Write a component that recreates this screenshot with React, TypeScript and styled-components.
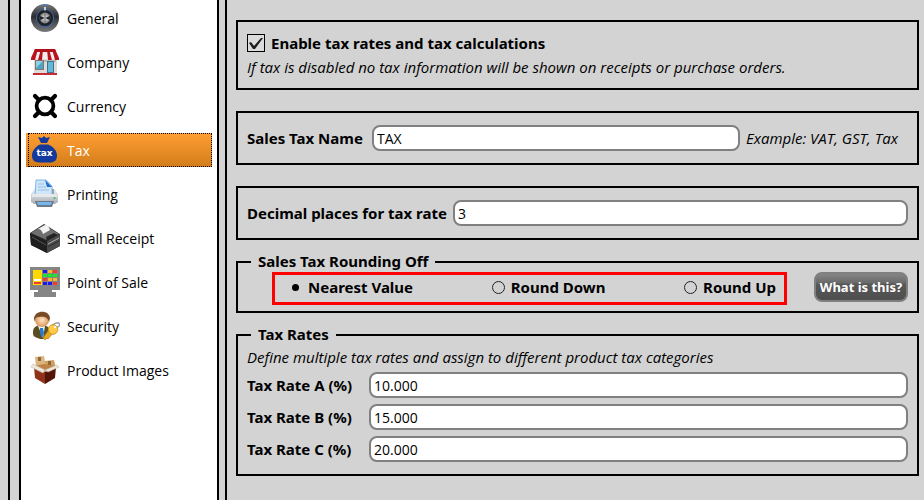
import React, { useState } from 'react';
import styled, { createGlobalStyle } from 'styled-components';

const GlobalStyle = createGlobalStyle`
  * {
    box-sizing: border-box;
  }
  body {
    margin: 0;
    background: #d3d3d3;
    color: #000;
    font-family: 'Noto Sans', 'Open Sans', sans-serif;
  }
`;

const Page = styled.div`
  display: flex;
  min-height: 100vh;
  padding-left: 8px;
`;

const Frame = styled.div`
  display: flex;
  flex: 1;
  min-width: 0;
  gap: 6px;
  padding-left: 9px;
  border-left: 2px solid #000;
`;

const Sidebar = styled.nav`
  display: flex;
  flex-direction: column;
  flex: 0 0 200px;
  gap: 10px;
  padding: 1px 5px;
  background: #fff;
  border: solid #000;
  border-width: 0 2px;
`;

const NavItem = styled.button<{ $active: boolean }>`
  position: relative;
  display: flex;
  align-items: center;
  gap: 7px;
  height: 34px;
  padding: 0 4px;
  border: 0;
  outline: none;
  background: ${(p) => (p.$active ? 'linear-gradient(#ff9f33, #d27c1a)' : 'transparent')};
  color: ${(p) => (p.$active ? '#fff' : '#000')};
  font: 14px/20px 'Open Sans', sans-serif;
  text-align: left;

  &::after {
    content: '';
    display: ${(p) => (p.$active ? 'block' : 'none')};
    position: absolute;
    inset: 0 0 0 2px;
    border: 1px dotted #000;
  }
`;

const NavText = styled.span`
  padding-top: 2px;
`;

const IconArt = styled.svg`
  width: 30px;
  height: 30px;
  flex: none;
`;

const Content = styled.main`
  display: flex;
  flex-direction: column;
  flex: 1;
  min-width: 0;
  gap: 21px;
  padding: 20px 5px 20px 9px;
  border-left: 2px solid #000;
`;

const Panel = styled.section`
  padding: 12px 9px;
  border: 2px solid #000;
`;

const Group = styled.fieldset<{ $bottom: number }>`
  min-width: 0;
  margin: -9px 0 0;
  padding: 0 9px ${(p) => p.$bottom}px;
  border: 2px solid #000;
`;

const Legend = styled.legend`
  margin-left: 4px;
  padding: 0 7px 2px;
  font: bold 15px/18px 'Noto Sans', sans-serif;
`;

const CheckLabel = styled.label`
  display: flex;
  align-items: center;
  gap: 6px;
  height: 18px;
  font: bold 15px/18px 'Noto Sans', sans-serif;
`;

const CheckCell = styled.span`
  display: grid;
  width: 18px;
  height: 18px;

  > * {
    grid-area: 1 / 1;
  }
`;

const CheckInput = styled.input`
  appearance: none;
  width: 18px;
  height: 18px;
  margin: 0;
  border: 1px solid #000;
  background: #dcdcdc;

  &:not(:checked) + svg {
    visibility: hidden;
  }
`;

const CheckMark = styled.svg`
  width: 18px;
  height: 18px;
  pointer-events: none;
`;

const Note = styled.p`
  margin: 0;
  font: italic 15px/24px 'Open Sans', sans-serif;
`;

const PanelNote = styled(Note)`
  margin: 3px 0 -3px;
`;

const GroupNote = styled(Note)`
  margin-bottom: 3px;
`;

const Example = styled.span`
  flex: 0 0 162px;
  font: italic 15px/24px 'Open Sans', sans-serif;
`;

const FieldRow = styled.div`
  display: flex;
  align-items: center;
  gap: 6px;

  > label {
    min-width: 119px;
  }
`;

const RateList = styled.div`
  display: grid;
  grid-template-columns: 116px 1fr;
  align-items: center;
  gap: 6px;
`;

const FieldLabel = styled.label`
  font: bold 15px/20px 'Noto Sans', sans-serif;
  white-space: nowrap;
`;

const TextField = styled.input`
  flex: 1;
  min-width: 0;
  width: 100%;
  height: 26px;
  padding: 0 3px;
  border: 2px solid #808080;
  border-radius: 8px;
  background: #fff;
  color: #000;
  font: 14px/20px 'Open Sans', sans-serif;
`;

const RoundingRow = styled.div`
  display: flex;
  align-items: flex-start;
  gap: 27px;
  padding-left: 25px;
`;

const RadioBox = styled.div`
  display: flex;
  flex: 1;
  align-items: center;
  justify-content: space-between;
  height: 33px;
  padding: 0 8px 3px 14px;
  border: 3px solid #f00;
`;

const RadioLabel = styled.label`
  display: flex;
  align-items: center;
  gap: 6px;
  font: bold 15px/20px 'Noto Sans', sans-serif;
`;

const RadioInput = styled.input`
  appearance: none;
  width: 13px;
  height: 13px;
  margin: 0;
  border: 1px solid #222;
  border-radius: 50%;

  &:checked {
    border: 3px solid transparent;
    background: #000 padding-box;
  }
`;

const HelpButton = styled.button`
  width: 94px;
  height: 30px;
  padding: 0;
  border: 2px solid #808080;
  border-radius: 8px;
  background: linear-gradient(#858585, #686868 36%, #585858 37%, #4e4e4e);
  color: #fff;
  font: bold 13px/20px 'Noto Sans', sans-serif;
  white-space: nowrap;
`;

const GeneralIcon = () => (
  <IconArt viewBox="0 0 30 30" aria-hidden="true">
    <defs>
      <linearGradient id="dial" x2="0" y2="1">
        <stop stopColor="#777b80" />
        <stop offset=".45" stopColor="#2b2c2e" />
        <stop offset=".6" stopColor="#454647" />
        <stop offset="1" stopColor="#77797c" />
      </linearGradient>
      <radialGradient id="knob">
        <stop stopColor="#ffffff" />
        <stop offset="1" stopColor="#77797c" />
      </radialGradient>
    </defs>
    <circle cx="15" cy="15" r="14" fill="url(#dial)" />
    <circle cx="15" cy="15" r="8.6" fill="#202225" stroke="#3863b0" strokeWidth="1" />
    <circle cx="15" cy="15" r="5.4" fill="url(#knob)" />
    <path d="M10 13l5 2 5-2v4l-5-2-5 2z" fill="#232427" />
    <path d="M15 11v8" stroke="#4a4c50" strokeWidth=".8" />
    <path d="M13 1.2h4l-2 2z" fill="#3980e8" />
    <path d="M15 4v3.5" stroke="#fff" strokeWidth="1.4" />
  </IconArt>
);

const CompanyIcon = () => (
  <IconArt viewBox="0 0 30 30" aria-hidden="true">
    <path d="M4 11h23v16H4z" fill="#dedcdb" />
    <path d="M5 13h21v2H5z" fill="#b9b5b3" />
    <path d="M5 13h9v10H5z" fill="#86726b" />
    <path d="M6 14h7v8H6z" fill="#4aa5c6" />
    <path d="M6 14h7l-7 7z" fill="#8bd0e4" />
    <path d="M17 14h7v12h-7z" fill="#3e7391" />
    <path d="M18 15h5v10h-5z" fill="#62b8d5" />
    <path d="M5 2h20l4 10H1z" fill="#f3eeee" />
    <path d="M5 2h3L5 13H1v-2zM11 2h2l-1 11H8zM17 2h2l3 11h-4zM22 2h3l4 9v2h-4z" fill="#b9141d" />
    <path d="M5 2h20l1 3H4z" fill="#b3121b" />
    <path d="M3 26h24v2H3z" fill="#cb2934" />
  </IconArt>
);

const CurrencyIcon = () => (
  <IconArt viewBox="0 0 30 30" aria-hidden="true">
    <circle cx="15" cy="15" r="8.4" fill="none" stroke="#000" strokeWidth="3.8" />
    <path d="M5 5l4 4M25 5l-4 4M5 25l4-4M25 25l-4-4" stroke="#000" strokeWidth="4.2" strokeLinecap="round" />
  </IconArt>
);

const TaxText = styled.text`
  font: bold 9px 'DejaVu Sans', sans-serif;
`;

const TaxIcon = () => (
  <IconArt viewBox="0 0 30 30" aria-hidden="true">
    <path
      d="M8 2l4 1 2-2 2 2 4-1-3 6h-6zM10 9.500h8c5 2 9 6 9 11 0 5-3 7-7 7H9c-5 0-7-3-7-7 0-5 4-9 8-11z"
      fill="#12399b"
    />
    <TaxText x="14.5" y="21" textAnchor="middle" fill="#fff">tax</TaxText>
  </IconArt>
);

const PrinterIcon = () => (
  <IconArt viewBox="0 0 30 30" aria-hidden="true">
    <defs>
      <linearGradient id="printer" x2="0" y2="1">
        <stop stopColor="#f1f2f3" />
        <stop offset="1" stopColor="#a9aeb4" />
      </linearGradient>
    </defs>
    <path d="M4 10h21l3 5v8l-3 2H4l-3-2v-8z" fill="url(#printer)" />
    <path d="M5 10h19v6H5z" fill="#9aa2aa" />
    <path d="M6 1h10l6 6v9H5z" fill="#cfe7fc" stroke="#67a6df" strokeWidth=".8" />
    <path d="M15 1l7 7h-5z" fill="#1c6dcc" />
    <path d="M8 5h6M8 8h8M8 11h11" stroke="#9bbfe0" />
    <path d="M2 15h25v3H2z" fill="#e6e8ea" />
    <path d="M5 22h19l-2 6H7z" fill="#6e7984" />
    <path d="M7 23h15l-1 3H8z" fill="#77b5ee" />
    <circle cx="24.500" cy="19" r="1" fill="#25c843" />
  </IconArt>
);

const ReceiptIcon = () => (
  <IconArt viewBox="0 0 30 30" aria-hidden="true">
    <path d="M0 10L14 1l16 10v12l-13 7L1 22z" fill="#343434" />
    <path d="M0 10l17 8v12L1 22z" fill="#1f1f1f" />
    <path d="M17 18l13-7v12l-13 7z" fill="#4b4b4b" />
    <path d="M1 10l13-8 15 9-12 6z" fill="#6f6f6f" />
    <path d="M16 14l8-4 4 2-11 6z" fill="#242424" />
    <path d="M8 6l7-4c3 0 4 2 5 5l-7 4c-1-3-2-5-5-5z" fill="#f2f2f2" />
    <path d="M18 21l11-6" stroke="#b0b0b0" />
    <path d="M18 24l11-6" stroke="#303030" />
    <path d="M2 14l14 8" stroke="#555" />
  </IconArt>
);

const tiles = [
  ['#1818f5', '#ffb52b', '#f53a2e'],
  ['#10ee24', '#10ee24', '#10ee24'],
  ['#f53a2e', '#ffb52b', '#ffb52b'],
  ['#1818f5', '#1818f5', '#f53a2e'],
];

const PosIcon = () => (
  <IconArt viewBox="0 0 30 30" aria-hidden="true">
    <path d="M0 0h30v23H22v2h4v5H4v-5h4v-2H0z" fill="#858585" />
    <path d="M3 3h9v15H3z" fill="#ffd900" />
    <path d="M4 12h7v2H4z" fill="#fff" />
    <path d="M4 15h7v2H4z" fill="#ef3b2f" />
    {tiles.map((line, y) =>
      line.map((fill, x) => (
        <rect key={`${x}-${y}`} x={13 + x * 5} y={3 + y * 4} width={4} height={3} fill={fill} />
      )),
    )}
  </IconArt>
);

const SecurityIcon = () => (
  <IconArt viewBox="0 0 30 30" aria-hidden="true">
    <defs>
      <radialGradient id="face">
        <stop stopColor="#ffe6c4" />
        <stop offset="1" stopColor="#d9975e" />
      </radialGradient>
    </defs>
    <path d="M3 21c0-5 4-7 8-7s8 1 10 6l-3 7c-5 2-9 1-13-1-2-1-2-3-2-5z" fill="#5b4d22" />
    <path d="M8 15h7l-2 12z" fill="#f4f5f7" />
    <path d="M10 17h3l1 5-2 5-2-5z" fill="#247bce" />
    <circle cx="12" cy="9" r="7" fill="url(#face)" />
    <path d="M4 8c0-9 15-10 16-1l-1 4c-1-5-5-6-10-5-3 0-4 1-4 5z" fill="#794c27" />
    <ellipse cx="26" cy="14.500" rx="3.800" ry="2.200" transform="rotate(-25 26 14.500)" fill="none" stroke="#9ba0a8" strokeWidth="1.400" />
    <path d="M18 20l-5 7 2 2 2-2 1 1 5-6z" fill="#e5a821" stroke="#b87a12" strokeWidth=".7" />
    <circle cx="23" cy="18.500" r="4.800" fill="#ffca45" stroke="#c58b1c" strokeWidth=".8" />
    <circle cx="25" cy="16" r="1.200" fill="#fff" />
  </IconArt>
);

const ProductIcon = () => (
  <IconArt viewBox="0 0 30 30" aria-hidden="true">
    <path d="M5 2l9-1 2 11H6z" fill="#dcb67f" />
    <path d="M15 6l9-1 2 8H15z" fill="#cfa062" />
    <path d="M8 2h3v4H8zM18 6h3v4h-3z" fill="#8d6639" />
    <path d="M4 12l11 5v12L5 23z" fill="#8e3218" />
    <path d="M15 17l11-5-1 11-10 6z" fill="#541509" />
    <path d="M4 11l10-2 11 2-10 6z" fill="#bd8448" />
    <path d="M3 9l-2 3 12 6 2-3zM27 10l2 2-11 5-3-2z" fill="#eee8df" stroke="#c7b9a5" strokeWidth=".6" />
  </IconArt>
);

const sections = [
  { name: 'General', Icon: GeneralIcon },
  { name: 'Company', Icon: CompanyIcon },
  { name: 'Currency', Icon: CurrencyIcon },
  { name: 'Tax', Icon: TaxIcon },
  { name: 'Printing', Icon: PrinterIcon },
  { name: 'Small Receipt', Icon: ReceiptIcon },
  { name: 'Point of Sale', Icon: PosIcon },
  { name: 'Security', Icon: SecurityIcon },
  { name: 'Product Images', Icon: ProductIcon },
];

const roundings = ['Nearest Value', 'Round Down', 'Round Up'];

const rates = [
  { id: 'A', value: '10.000' },
  { id: 'B', value: '15.000' },
  { id: 'C', value: '20.000' },
];

export default function App() {
  const [section, setSection] = useState('Tax');
  const [rounding, setRounding] = useState(roundings[0]);

  return (
    <Page>
      <GlobalStyle />
      <Frame>
        <Sidebar>
          {sections.map(({ name, Icon }) => (
            <NavItem
              key={name}
              type="button"
              $active={name === section}
              aria-current={name === section ? 'page' : undefined}
              onClick={() => setSection(name)}
            >
              <Icon />
              <NavText>{name}</NavText>
            </NavItem>
          ))}
        </Sidebar>
        <Content>
          <Panel>
            <CheckLabel>
              <CheckCell>
                <CheckInput type="checkbox" defaultChecked />
                <CheckMark viewBox="0 0 18 18" aria-hidden="true">
                  <path d="M2 9l2-1 3 4 7-8h2L8 15H6z" fill="#1c1c1c" />
                </CheckMark>
              </CheckCell>
              Enable tax rates and tax calculations
            </CheckLabel>
            <PanelNote>
              If tax is disabled no tax information will be shown on receipts or purchase orders.
            </PanelNote>
          </Panel>
          <Panel>
            <FieldRow>
              <FieldLabel htmlFor="tax-name">Sales Tax Name</FieldLabel>
              <TextField id="tax-name" defaultValue="TAX" />
              <Example>Example: VAT, GST, Tax</Example>
            </FieldRow>
          </Panel>
          <Panel>
            <FieldRow>
              <FieldLabel htmlFor="decimals">Decimal places for tax rate</FieldLabel>
              <TextField id="decimals" defaultValue="3" />
            </FieldRow>
          </Panel>
          <Group $bottom={6}>
            <Legend>Sales Tax Rounding Off</Legend>
            <RoundingRow>
              <RadioBox>
                {roundings.map((name) => (
                  <RadioLabel key={name}>
                    <RadioInput
                      type="radio"
                      name="rounding"
                      checked={name === rounding}
                      onChange={() => setRounding(name)}
                    />
                    {name}
                  </RadioLabel>
                ))}
              </RadioBox>
              <HelpButton type="button">What is this?</HelpButton>
            </RoundingRow>
          </Group>
          <Group $bottom={12}>
            <Legend>Tax Rates</Legend>
            <GroupNote>Define multiple tax rates and assign to different product tax categories</GroupNote>
            <RateList>
              {rates.map(({ id, value }) => (
                <React.Fragment key={id}>
                  <FieldLabel htmlFor={`rate-${id}`}>Tax Rate {id} (%)</FieldLabel>
                  <TextField id={`rate-${id}`} defaultValue={value} />
                </React.Fragment>
              ))}
            </RateList>
          </Group>
        </Content>
      </Frame>
    </Page>
  );
}
